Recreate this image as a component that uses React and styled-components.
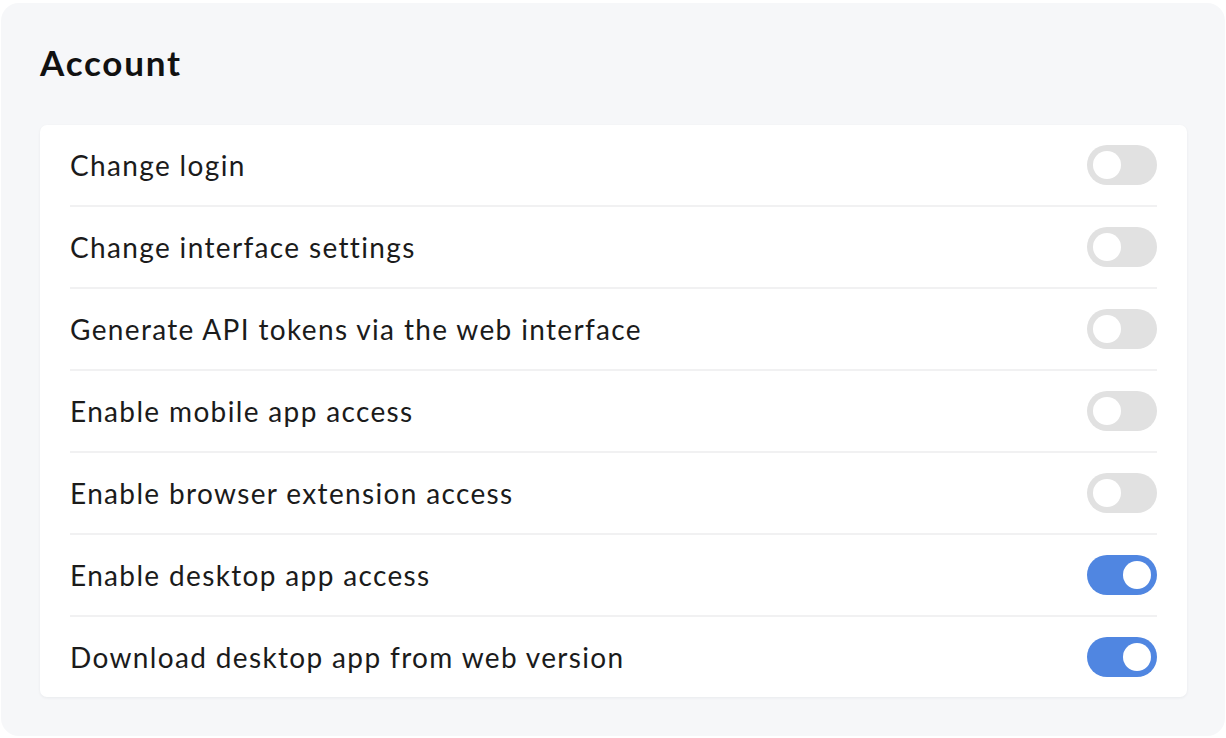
import React, { useState } from 'react'
import styled, { createGlobalStyle } from 'styled-components'

const GlobalStyle = createGlobalStyle`
  html, body {
    margin: 0;
    padding: 0;
    background: #ffffff;
  }
  body {
    font-family: Lato, "Open Sans", sans-serif;
    color: #1b1b1b;
  }
`

const Page = styled.div`
  padding: 3px 1px 2px 1px;
`

const Panel = styled.section`
  background: #f6f7f9;
  border-radius: 18px;
  padding: 35px 38px 39px 39px;
  height: 733px;
  box-sizing: border-box;
`

const Title = styled.h1`
  margin: 0 0 39px 0;
  font-size: 35px;
  line-height: 48px;
  font-weight: 700;
  letter-spacing: 1.8px;
  color: #111;
`

const Card = styled.div`
  background: #ffffff;
  border-radius: 7px;
  box-shadow: 0 1px 3px rgba(20, 30, 50, 0.06);
  padding: 0 30px;
`

const Row = styled.div`
  display: flex;
  align-items: center;
  justify-content: space-between;
  height: 80px;
  border-bottom: 2px solid #f1f1f2;

  &:last-child {
    border-bottom: none;
  }
`

const Label = styled.span`
  font-size: 28px;
  font-weight: 400;
  letter-spacing: 1.35px;
  color: #1b1b1b;
`

const Track = styled.button`
  position: relative;
  width: 70px;
  height: 40px;
  border: none;
  padding: 0;
  border-radius: 20px;
  cursor: pointer;
  background: ${p => (p.$on ? '#5086e1' : '#e1e1e1')};
  flex-shrink: 0;
`

const Knob = styled.span`
  position: absolute;
  top: 6px;
  left: ${p => (p.$on ? '36px' : '6px')};
  width: 28px;
  height: 28px;
  border-radius: 50%;
  background: #ffffff;
`

const initial = [
  { label: 'Change login', on: false },
  { label: 'Change interface settings', on: false },
  { label: 'Generate API tokens via the web interface', on: false },
  { label: 'Enable mobile app access', on: false },
  { label: 'Enable browser extension access', on: false },
  { label: 'Enable desktop app access', on: true },
  { label: 'Download desktop app from web version', on: true },
]

function Toggle({ on, onClick }) {
  return (
    <Track $on={on} onClick={onClick} aria-pressed={on}>
      <Knob $on={on} />
    </Track>
  )
}

export default function App() {
  const [items, setItems] = useState(initial)

  const flip = i =>
    setItems(list => list.map((it, j) => (j === i ? { ...it, on: !it.on } : it)))

  return (
    <Page>
      <GlobalStyle />
      <Panel>
        <Title>Account</Title>
        <Card>
          {items.map((it, i) => (
            <Row key={it.label}>
              <Label>{it.label}</Label>
              <Toggle on={it.on} onClick={() => flip(i)} />
            </Row>
          ))}
        </Card>
      </Panel>
    </Page>
  )
}
